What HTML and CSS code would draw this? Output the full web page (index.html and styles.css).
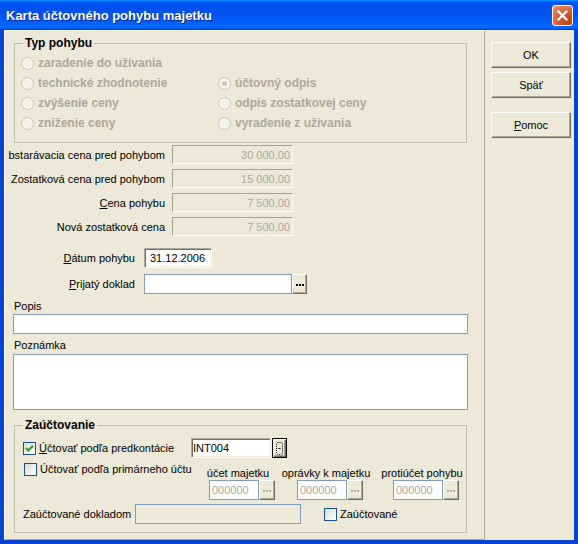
FILE: index.html
```html
<!DOCTYPE html>
<html lang="sk">

<head>
    <meta charset="UTF-8">
    <title>Karta účtovného pohybu majetku</title>
    <link rel="stylesheet" href="styles.css">
</head>

<body>
    <div class="window">
        <div class="titlebar">
            <span class="title">Karta účtovného pohybu majetku</span>
            <span class="close-btn">
                <svg width="13" height="13" viewBox="0 0 13 13">
                    <path d="M2.5 2.5 L10.5 10.5 M10.5 2.5 L2.5 10.5" stroke="#fff" stroke-width="2.2" stroke-linecap="square" fill="none"/>
                </svg>
            </span>
        </div>

        <div class="frame">
            <div class="main-panel">
                <fieldset class="group">
                    <legend>Typ pohybu</legend>
                    <div class="radio-grid">
                        <div class="radio"><span class="radio-circle"></span>zaradenie do užívania</div>
                        <span></span>
                        <div class="radio"><span class="radio-circle"></span>technické zhodnotenie</div>
                        <div class="radio"><span class="radio-circle checked"></span>účtovný odpis</div>
                        <div class="radio"><span class="radio-circle"></span>zvýšenie ceny</div>
                        <div class="radio"><span class="radio-circle"></span>odpis zostatkovej ceny</div>
                        <div class="radio"><span class="radio-circle"></span>zníženie ceny</div>
                        <div class="radio"><span class="radio-circle"></span>vyradenie z užívania</div>
                    </div>
                </fieldset>

                <div class="price-list">
                    <div class="price-row">
                        <div class="price-label">bstarávacia cena pred pohybom</div>
                        <div class="field field-disabled price-field">30 000,00</div>
                    </div>
                    <div class="price-row">
                        <div class="price-label">Zostatková cena pred pohybom</div>
                        <div class="field field-disabled price-field">15 000,00</div>
                    </div>
                    <div class="price-row">
                        <div class="price-label"><span><u>C</u>ena pohybu</span></div>
                        <div class="field field-disabled price-field">7 500,00</div>
                    </div>
                    <div class="price-row">
                        <div class="price-label">Nová zostatková cena</div>
                        <div class="field field-disabled price-field">7 500,00</div>
                    </div>
                </div>

                <div class="form-row date-row">
                    <div class="form-label"><span><u>D</u>átum pohybu</span></div>
                    <div class="field field-sunken date-field">31.12.2006</div>
                </div>
                <div class="form-row doc-row">
                    <div class="form-label"><span><u>P</u>rijatý doklad</span></div>
                    <div class="field field-xp doc-field"></div>
                    <div class="dots-btn">
                        <svg width="8" height="2" viewBox="0 0 8 2"><rect x="0" y="0" width="2" height="2"/><rect x="3" y="0" width="2" height="2"/><rect x="6" y="0" width="2" height="2"/></svg>
                    </div>
                </div>

                <div class="text-label popis-label">Popis</div>
                <div class="field field-xp popis-field"></div>
                <div class="text-label note-label">Poznámka</div>
                <div class="field field-xp note-field"></div>

                <fieldset class="group acc-group">
                    <legend>Zaúčtovanie</legend>
                    <div class="acc-row1">
                        <div class="check-item predk-check">
                            <span class="checkbox">
                                <svg width="11" height="11" viewBox="0 0 11 11"><path d="M2 5 L4.3 7.5 L9 2.8" stroke="#21a121" stroke-width="2" fill="none"/></svg>
                            </span>
                            <span><u>Ú</u>čtovať podľa predkontácie</span>
                        </div>
                        <div class="field field-sunken predk-field">INT004</div>
                        <div class="focus-btn">
                            <svg width="9" height="15" viewBox="0 0 9 15">
                                <rect x="1.5" y="1.5" width="6" height="12" rx="2" fill="none" stroke="#000" stroke-dasharray="1 1"/>
                                <rect x="3.5" y="7" width="2" height="1"/>
                            </svg>
                        </div>
                    </div>

                    <div class="acc-row2">
                        <div class="check-item prim-check">
                            <span class="checkbox"></span>
                            <span>Účtovať podľa primárneho účtu</span>
                        </div>
                        <div class="acc-col col-ucet">
                            <span class="col-head">účet majetku</span>
                            <div class="col-input">
                                <div class="field field-xp code-field">000000</div>
                                <div class="dots-btn disabled"><svg width="8" height="2" viewBox="0 0 8 2"><rect x="0" y="0" width="2" height="2"/><rect x="3" y="0" width="2" height="2"/><rect x="6" y="0" width="2" height="2"/></svg></div>
                            </div>
                        </div>
                        <div class="acc-col col-opravky">
                            <span class="col-head">oprávky k majetku</span>
                            <div class="col-input">
                                <div class="field field-xp code-field">000000</div>
                                <div class="dots-btn disabled"><svg width="8" height="2" viewBox="0 0 8 2"><rect x="0" y="0" width="2" height="2"/><rect x="3" y="0" width="2" height="2"/><rect x="6" y="0" width="2" height="2"/></svg></div>
                            </div>
                        </div>
                        <div class="acc-col col-proti">
                            <span class="col-head">protiúčet pohybu</span>
                            <div class="col-input">
                                <div class="field field-xp code-field">000000</div>
                                <div class="dots-btn disabled"><svg width="8" height="2" viewBox="0 0 8 2"><rect x="0" y="0" width="2" height="2"/><rect x="3" y="0" width="2" height="2"/><rect x="6" y="0" width="2" height="2"/></svg></div>
                            </div>
                        </div>
                    </div>

                    <div class="acc-row3">
                        <span class="doklad-label">Zaúčtované dokladom</span>
                        <div class="field field-xp doklad-field"></div>
                        <div class="check-item posted-check">
                            <span class="checkbox"></span>
                            <span>Zaúčtované</span>
                        </div>
                    </div>
                </fieldset>
            </div>

            <div class="side-panel">
                <div class="btn">OK</div>
                <div class="btn">Späť</div>
                <div class="btn btn-help"><span><u>P</u>omoc</span></div>
            </div>
        </div>
    </div>
</body>

</html>
```

FILE: styles.css
```css
* {
    box-sizing: border-box;
}

body {
    margin: 0;
    background-color: #ece9d8;
    font-family: "Liberation Sans", Arial, sans-serif;
    font-size: 11px;
    color: #000;
}

u {
    text-decoration: underline;
    text-underline-offset: 1px;
}

.window {
    width: 578px;
    height: 544px;
    display: flex;
    flex-direction: column;
}

/* title bar */
.titlebar {
    flex: none;
    height: 30px;
    display: flex;
    align-items: center;
    padding: 0 5px 0 6px;
    background: linear-gradient(180deg, #0997ff, #0053ee 8%, #0050ee 40%, #0066ff 88%, #0066ff 93%, #005bff 95%, #003dd7 96%, #003dd7);
}

.title {
    flex: 1;
    color: #fff;
    font-size: 13px;
    font-weight: bold;
    text-shadow: 1px 1px 0 #0f1f8a;
}

.close-btn {
    width: 21px;
    height: 21px;
    border: 1px solid #fff;
    border-radius: 3px;
    background: radial-gradient(circle at 80% 85%, #c23c12 0, #d95a2e 45%, #e2805e 80%, #eaa68c 100%);
    display: flex;
    align-items: center;
    justify-content: center;
}

.frame {
    flex: 1;
    display: flex;
    border: 4px solid #0842d3;
    border-top: 0;
    background-color: #ece9d8;
}

/* left panel */
.main-panel {
    width: 481px;
    border: 1px solid;
    border-color: #fff #aca899 #aca899 #fff;
    padding: 5px 0 0 9px;
}

.group {
    width: 453px;
    min-width: 0;
    margin: 0;
    padding: 0;
    border: 1px solid #c0bdae;
}

.group legend {
    margin-left: 8px;
    padding: 0 2px;
    font-size: 12px;
    font-weight: bold;
    line-height: 14px;
}

.radio-grid {
    display: grid;
    grid-template-columns: 197px 1fr;
    grid-auto-rows: 20px;
    padding: 3px 0 9px 6px;
}

.radio {
    display: flex;
    align-items: center;
    gap: 4px;
    color: #aca899;
    font-size: 12px;
    font-weight: bold;
    white-space: nowrap;
}

.radio-circle {
    width: 13px;
    height: 13px;
    border: 1px solid #cac8bb;
    border-radius: 50%;
    background-color: #f5f4ea;
    display: flex;
    align-items: center;
    justify-content: center;
}

.radio-circle.checked::after {
    content: "";
    width: 5px;
    height: 5px;
    border-radius: 50%;
    background-color: #cac8bb;
}

/* fields */
.field {
    height: 20px;
    display: flex;
    align-items: center;
    white-space: nowrap;
    overflow: hidden;
}

.field-disabled {
    border: 1px solid;
    border-color: #a5a295 #fcfcf9 #fcfcf9 #a5a295;
    background-color: #ece9d8;
    color: #aca899;
}

.field-sunken {
    border: 1px solid;
    border-color: #aca899 #fff #fff #aca899;
    box-shadow: inset 1px 1px 0 #716f64, inset -1px -1px 0 #f1efe2;
    background-color: #fff;
}

.field-xp {
    border: 1px solid #7f9db9;
    background-color: #fff;
}

.price-list {
    display: flex;
    flex-direction: column;
    gap: 5px;
    margin-top: 2px;
}

.price-row {
    display: flex;
    align-items: center;
    height: 19px;
}

.price-label {
    flex: none;
    width: 151px;
    display: flex;
    justify-content: flex-end;
    white-space: nowrap;
}

.price-field {
    width: 121px;
    height: 19px;
    margin-left: 7px;
    justify-content: flex-end;
    padding-right: 2px;
}

.form-row {
    display: flex;
    align-items: center;
    height: 20px;
}

.date-row {
    margin-top: 12px;
}

.doc-row {
    margin-top: 6px;
}

.form-label {
    flex: none;
    width: 121px;
    display: flex;
    justify-content: flex-end;
    white-space: nowrap;
}

.date-field {
    width: 68px;
    margin-left: 9px;
    padding-left: 5px;
}

.doc-field {
    width: 148px;
    margin-left: 9px;
}

.dots-btn,
.focus-btn {
    flex: none;
    width: 15px;
    height: 20px;
    display: flex;
    align-items: center;
    justify-content: center;
    background-color: #ece9d8;
}

.dots-btn {
    border: 1px solid;
    border-color: #fff #716f64 #716f64 #fff;
    box-shadow: inset -1px -1px 0 #aca899;
    padding-top: 2px;
}

.dots-btn.disabled {
    width: 16px;
}

.dots-btn.disabled svg {
    fill: #aca899;
}

.focus-btn {
    margin-left: 1px;
    border: 1px solid #000;
    box-shadow: inset 1px 1px 0 #fff, inset -1px -1px 0 #716f64, inset -2px -2px 0 #aca899;
}

.text-label {
    line-height: 14px;
}

.popis-label {
    margin-top: 5px;
}

.popis-field {
    width: 455px;
    margin: 1px 0 0 -1px;
}

.note-label {
    margin-top: 4px;
}

.note-field {
    width: 455px;
    height: 56px;
    margin: 2px 0 0 -1px;
}

/* zauctovanie */
.acc-group {
    margin-top: 8px;
}

.acc-row1 {
    display: flex;
    align-items: center;
    height: 20px;
    margin-top: 6px;
    padding-left: 8px;
}

.check-item {
    display: flex;
    align-items: center;
    gap: 3px;
    white-space: nowrap;
}

.checkbox {
    flex: none;
    width: 13px;
    height: 13px;
    border: 1px solid #1c5180;
    background: linear-gradient(135deg, #dcdcd7, #fff);
    display: flex;
    align-items: center;
    justify-content: center;
}

.predk-check {
    width: 168px;
}

.predk-field {
    width: 80px;
    padding-left: 1px;
}

.acc-row2 {
    display: flex;
    align-items: flex-start;
    margin-top: 4px;
}

.prim-check {
    width: 194px;
    height: 14px;
    padding-left: 9px;
}

.acc-col {
    width: 66px;
    margin-top: 4px;
    display: flex;
    flex-direction: column;
    align-items: center;
}

.col-opravky {
    margin-left: 22px;
}

.col-proti {
    margin-left: 30px;
}

.col-head {
    line-height: 14px;
    white-space: nowrap;
    margin-right: 8px;
}

.col-input {
    display: flex;
}

.code-field {
    width: 50px;
    padding-left: 2px;
    color: #aca899;
}

.acc-row3 {
    display: flex;
    align-items: center;
    height: 20px;
    margin: 4px 0 8px;
    padding-left: 8px;
}

.doklad-label {
    width: 112px;
    white-space: nowrap;
}

.doklad-field {
    width: 166px;
    background-color: #ece9d8;
}

.posted-check {
    margin-left: 23px;
}

/* right panel */
.side-panel {
    flex: 1;
    display: flex;
    flex-direction: column;
    gap: 4px;
    padding: 12px 0 0 6px;
}

.btn {
    width: 80px;
    height: 26px;
    border: 1px solid;
    border-color: #fff #716f64 #716f64 #fff;
    box-shadow: inset -1px -1px 0 #aca899;
    display: flex;
    align-items: center;
    justify-content: center;
}

.btn-help {
    margin-top: 10px;
}
```
